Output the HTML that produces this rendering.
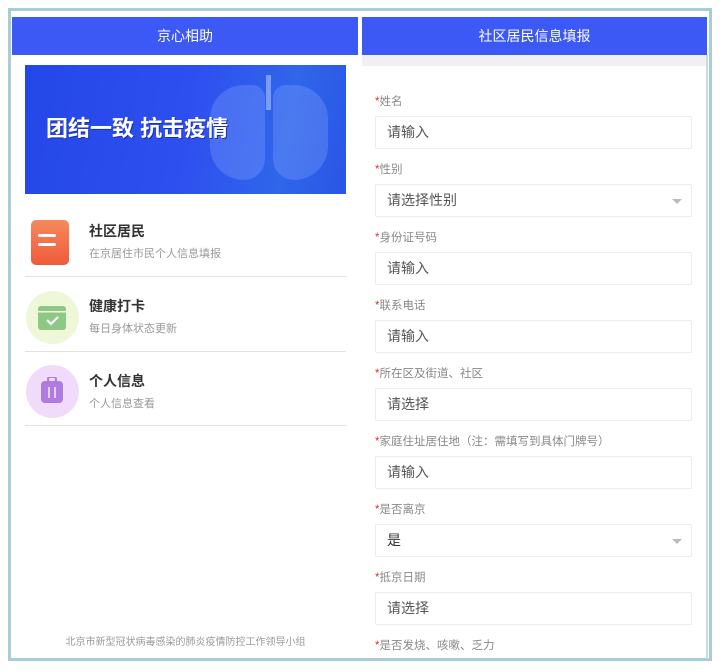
<!DOCTYPE html>
<html><head><meta charset="utf-8"><style>
*{margin:0;padding:0;box-sizing:border-box}
body{width:720px;height:672px;background:#fff;position:relative;overflow:hidden;font-family:"Liberation Sans","Noto Sans CJK SC",sans-serif}
.frame{position:absolute;left:8px;top:8px;width:704px;height:653px;border:3px solid #a9cdd8}
.hd{position:absolute;top:17px;height:38px;background:#3c58f5;color:#fff;font-size:14px;line-height:38px;text-align:center}
.abs{position:absolute}
.title{position:absolute;left:89px;font-size:14px;font-weight:bold;color:#333}
.sub{position:absolute;left:89px;font-size:11px;color:#999}
.div{position:absolute;left:25px;width:321px;height:1px;background:#e2e2e2}
.lbl{position:absolute;left:375px;font-size:11.5px;color:#888}
.lbl b{color:#d9343a;font-weight:normal}
.inp{position:absolute;left:375px;width:317px;height:33px;border:1px solid #ececec;border-radius:2px;font-size:14px;color:#555;line-height:31px;padding-left:11px}
.arr{position:absolute;right:9px;top:14px;width:0;height:0;border-left:5px solid transparent;border-right:5px solid transparent;border-top:5px solid #bbb}
</style></head><body>
<div class="frame"></div>
<div class="hd" style="left:12px;width:346px">京心相助</div>
<div class="hd" style="left:362px;width:345px">社区居民信息填报</div>
<div class="abs" style="left:362px;top:55px;width:345px;height:11px;background:#f0f0f3"></div>
<div class="abs" style="left:706px;top:55px;width:2px;height:604px;background:#c9dbe6"></div>

<div class="abs" style="left:25px;top:65px;width:321px;height:129px;background:linear-gradient(100deg,#2447e8 0%,#2e4ff0 50%,#2f66ea 80%,#2a55e6 100%);overflow:hidden">
 <div class="abs" style="left:185px;top:20px;width:55px;height:95px;border-radius:40px 15px 25px 40px;background:rgba(140,170,255,.3)"></div>
 <div class="abs" style="left:248px;top:20px;width:55px;height:95px;border-radius:15px 40px 40px 25px;background:rgba(140,170,255,.3)"></div>
 <div class="abs" style="left:241px;top:10px;width:5px;height:35px;background:rgba(200,215,255,.5)"></div>
 <div class="abs" style="left:21px;top:46px;color:#fff;font-size:22px;font-weight:bold;text-shadow:1px 1px 0 #1a2fb0">团结一致 抗击疫情</div>
</div>

<div class="abs" style="left:31px;top:220px;width:38px;height:45px;border-radius:5px;background:linear-gradient(#f58a5c,#ef5a3a)"></div>
<div class="abs" style="left:38px;top:234px;width:18px;height:3px;background:#fff;border-radius:2px"></div>
<div class="abs" style="left:38px;top:243px;width:18px;height:3px;background:#fff;border-radius:2px"></div>
<div class="title" style="top:221px">社区居民</div>
<div class="sub" style="top:245px">在京居住市民个人信息填报</div>
<div class="div" style="top:276px"></div>

<div class="abs" style="left:26px;top:291px;width:53px;height:53px;border-radius:50%;background:#eef8d8"></div>
<svg class="abs" style="left:38px;top:303px" width="28" height="27"><rect x="0" y="3" width="28" height="24" rx="3" fill="#8fc785"/><rect x="0" y="8" width="28" height="1.5" fill="#eef8d8"/><path d="M9 17l4 4 7-7" stroke="#fff" stroke-width="2.2" fill="none"/></svg>
<div class="title" style="top:296px">健康打卡</div>
<div class="sub" style="top:320px">每日身体状态更新</div>
<div class="div" style="top:351px"></div>

<div class="abs" style="left:26px;top:365px;width:53px;height:53px;border-radius:50%;background:#f0dcfa"></div>
<svg class="abs" style="left:41px;top:377px" width="22" height="28"><rect x="7" y="0" width="8" height="5" rx="2" fill="none" stroke="#b07be0" stroke-width="2"/><rect x="0" y="4" width="22" height="22" rx="4" fill="#b07be0"/><path d="M8 10v11M14 10v11" stroke="#e6d0f7" stroke-width="2"/></svg>
<div class="title" style="top:371px">个人信息</div>
<div class="sub" style="top:395px">个人信息查看</div>
<div class="div" style="top:425px"></div>

<div class="abs" style="left:25px;width:321px;top:633px;text-align:center;font-size:10px;color:#999">北京市新型冠状病毒感染的肺炎疫情防控工作领导小组</div>

<div class="lbl" style="top:93px"><b>*</b>姓名</div>
<div class="inp" style="top:116px">请输入</div>
<div class="lbl" style="top:161px"><b>*</b>性别</div>
<div class="inp" style="top:184px">请选择性别<span class="arr"></span></div>
<div class="lbl" style="top:229px"><b>*</b>身份证号码</div>
<div class="inp" style="top:252px">请输入</div>
<div class="lbl" style="top:297px"><b>*</b>联系电话</div>
<div class="inp" style="top:320px">请输入</div>
<div class="lbl" style="top:365px"><b>*</b>所在区及街道、社区</div>
<div class="inp" style="top:388px">请选择</div>
<div class="lbl" style="top:433px"><b>*</b>家庭住址居住地（注：需填写到具体门牌号）</div>
<div class="inp" style="top:456px">请输入</div>
<div class="lbl" style="top:501px"><b>*</b>是否离京</div>
<div class="inp" style="top:524px;color:#333">是<span class="arr"></span></div>
<div class="lbl" style="top:569px"><b>*</b>抵京日期</div>
<div class="inp" style="top:592px">请选择</div>
<div class="lbl" style="top:637px"><b>*</b>是否发烧、咳嗽、乏力</div>
</body></html>
